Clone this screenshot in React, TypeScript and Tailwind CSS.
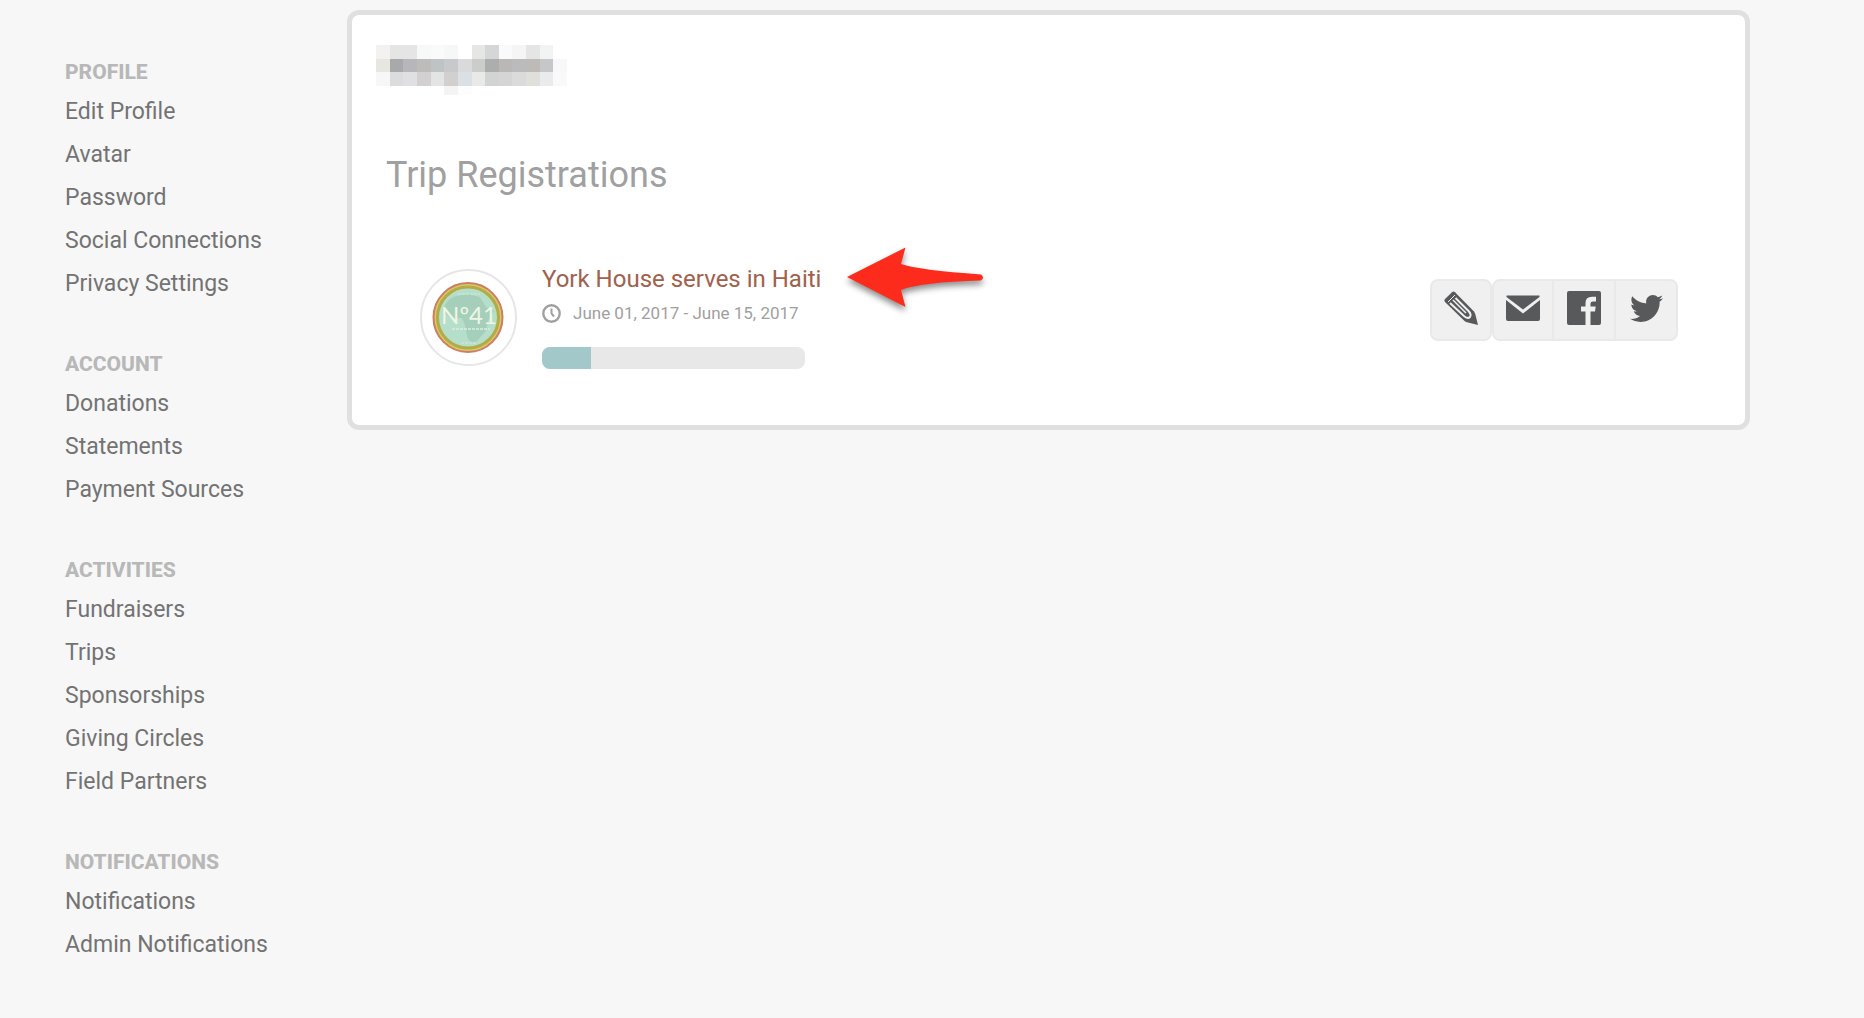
import type { ReactNode } from "react"
import { FaTwitter } from "react-icons/fa"

interface NavSection {
  title: string
  items: string[]
}

const sections: NavSection[] = [
  {
    title: "Profile",
    items: ["Edit Profile", "Avatar", "Password", "Social Connections", "Privacy Settings"],
  },
  { title: "Account", items: ["Donations", "Statements", "Payment Sources"] },
  {
    title: "Activities",
    items: ["Fundraisers", "Trips", "Sponsorships", "Giving Circles", "Field Partners"],
  },
  { title: "Notifications", items: ["Notifications", "Admin Notifications"] },
]

// Pixelated name, one color per cell
const nameCells: string[][] = [
  ["#f3f2f1", "#e5e5e5", "#e5e5e5", "#f7f9f8", "#fafafa", "#f6f8f7", "#fff", "#e6e6e4", "#d5d6d8", "#fafafb", "#f5f5f5", "#e5e5e5", "#f2f4f4", "#fff"],
  ["#e7e6e1", "#a8a9ab", "#b7b6bb", "#bdbcbb", "#bec3c4", "#c8c9cb", "#dadadd", "#cbcdca", "#adadad", "#b9b8b6", "#bbbbbe", "#bebab7", "#c6c7c9", "#f8f8fb"],
  ["#f7f7f7", "#dadcde", "#e0e0e3", "#d2d0d0", "#e3e5e4", "#d1d0ce", "#dae0e4", "#e9e9e7", "#d1d4d3", "#d5d5d5", "#dbdbdb", "#e0dfdc", "#e9ebed", "#f9f9f9"],
  ["#fff", "#fff", "#fff", "#fff", "#fff", "#f4f4f4", "#fdfdfd", "#fff", "#fff", "#fff", "#fff", "#fff", "#fff", "#fff"],
]

const HiddenName = () => (
  <svg width="191" height="50" viewBox="0 0 14 3.65" preserveAspectRatio="none" shapeRendering="crispEdges" role="img" aria-label="Hidden name">
    {nameCells.map((row, y) =>
      row.map((fill, x) => <rect key={`${x}-${y}`} x={x} y={y} width="1" height="1" fill={fill} />)
    )}
  </svg>
)

const PencilIcon = () => (
  <svg width="34" height="34" viewBox="0 0 34 34">
    <path d="M8 1.2Q9.5 0 11 1.2L30 20.5Q31 22 31.5 24L34 34L24 31.5Q22 31 20.5 30L1 11Q-.2 9.5 1 8Z" fill="#58595b" />
    <path d="M6 12L20.5 25.5Q24 28 26 26Q27.5 23.5 25 20.5L11.5 7" fill="none" stroke="#f0f0f0" strokeWidth="2" />
    <path d="M9 9L22 22" stroke="#f0f0f0" strokeWidth="1.5" />
    <path d="M4 11L11 4" stroke="#f0f0f0" strokeWidth="1" />
  </svg>
)

const MailIcon = () => (
  <svg width="34" height="34" viewBox="0 0 34 34" fill="#58595b">
    <path d="M.5 4.5H33.5V6L17 18.5L.5 6Z" />
    <path d="M0 9L17 22.5L34 9V28Q34 30 32 30H2Q0 30 0 28Z" />
  </svg>
)

const FacebookIcon = () => (
  <svg width="34" height="34" viewBox="0 0 34 34">
    <path d="M2 0H32Q34 0 34 2V32Q34 34 32 34H23.5V20.5H28L28.7 15.5H23.5V12.5Q23.5 10.5 26 10.5H29V5.8H25Q18.5 5.8 18.5 12V15.5H14V20.5H18.5V34H2Q0 34 0 32V2Q0 0 2 0Z" fill="#58595b" />
  </svg>
)

const ClockIcon = () => (
  <svg width="19" height="19" viewBox="0 0 19 19" fill="none" stroke="#a0a0a0" strokeWidth="2.4">
    <circle cx="9.5" cy="9.5" r="8.2" />
    <path d="M9.5 4.5V9.5L12 12.5" strokeWidth="2" />
  </svg>
)

const TripBadge = () => (
  <svg className="shrink-0" width="97" height="97" viewBox="0 0 97 97" role="img" aria-label="No 41">
    <defs>
      <clipPath id="badge-disc">
        <circle cx="48" cy="48.5" r="29" />
      </clipPath>
    </defs>
    <circle cx="48.5" cy="48.5" r="47.5" fill="#fff" stroke="#e6e6e6" strokeWidth="2" />
    <circle cx="48" cy="48.5" r="34.5" fill="#d5c968" stroke="#cf7c62" strokeWidth="2" />
    <circle cx="48" cy="48.500" r="30.5" fill="#b5dfcb" stroke="#b3ab45" strokeWidth="3" />
    <g clipPath="url(#badge-disc)">
      <path d="M24 38Q28 29 36 27L48 25L60 28L66 38L74 42L68 52L66 62L57 72Q50 76 47 67L45 56L42 49L31 49L25 44Z" fill="#a5cfbb" />
      <text x="49" y="55" textAnchor="middle" fontFamily="Lato, sans-serif" fontSize="24" fill="#eef6e4">
        Nº41
      </text>
      <path d="M32 60H70" stroke="#d9eedb" strokeWidth="1.5" strokeDasharray="3 1" />
      <path d="M41 74H57M38 25H60" stroke="#c8e6d3" strokeWidth="1.5" strokeDasharray="3 1" />
    </g>
  </svg>
)

const PointerArrow = () => (
  <svg className="absolute -top-6 left-full ml-6 overflow-visible drop-shadow-[0_4px_3px_rgba(0,0,0,0.45)]" width="140" height="62" viewBox="0 0 140 62" aria-hidden="true">
    <path d="M2 32L60.5 2.5L56 19Q74 25 136 29.5Q140 32.5 136 35.5Q76 37 56 45L60.5 62Z" fill="#fd2b1c" />
  </svg>
)

const ShareButton = ({ label, className, children }: { label: string; className: string; children: ReactNode }) => (
  <button
    type="button"
    aria-label={label}
    className={`flex h-[62px] w-[62px] items-center justify-center border-2 border-[#e9e9e9] bg-[#f0f0f0] pb-1 text-[#58595b] ${className}`}
  >
    {children}
  </button>
)

const Sidebar = () => (
  <nav className="flex w-[347px] shrink-0 flex-col gap-[33px] pt-[46px] pl-[65px]">
    {sections.map((section) => (
      <section key={section.title}>
        <h2 className="pt-2 text-[21px] leading-9 font-extrabold text-[#b8b8b8] uppercase">{section.title}</h2>
        <ul className="text-[23px] leading-[43px] text-[#737373]">
          {section.items.map((item) => (
            <li key={item}>
              <a href="#">{item}</a>
            </li>
          ))}
        </ul>
      </section>
    ))}
  </nav>
)

const TripRow = () => (
  <article className="flex items-start gap-[25px] pr-[43px] pl-11">
    <TripBadge />
    <div className="flex flex-col items-start">
      <div className="relative">
        <a href="#" className="block text-2xl leading-5 text-[#a0614c]">
          York House serves in Haiti
        </a>
        <PointerArrow />
      </div>
      <p className="mt-3 flex items-center gap-3 text-[17px] leading-6 text-[#a0a0a0]">
        <ClockIcon />
        June 01, 2017 - June 15, 2017
      </p>
      <div
        role="progressbar"
        aria-label="Funds raised"
        aria-valuenow={19}
        className="mt-[22px] h-[22px] w-[263px] overflow-hidden rounded-lg bg-[#e8e8e8]"
      >
        <div className="h-full bg-[#a3c8ca]" style={{ width: "18.7%" }} />
      </div>
    </div>
    <div className="mt-[10px] ml-auto flex">
      <ShareButton label="Edit" className="rounded-lg">
        <PencilIcon />
      </ShareButton>
      <ShareButton label="Email" className="rounded-l-lg">
        <MailIcon />
      </ShareButton>
      <ShareButton label="Facebook" className="border-l-0">
        <FacebookIcon />
      </ShareButton>
      <ShareButton label="Twitter" className="rounded-r-lg border-l-0">
        <FaTwitter size={33} />
      </ShareButton>
    </div>
  </article>
)

export default function App() {
  return (
    <div className="flex min-h-screen items-start bg-[#f7f7f7] font-[Roboto,sans-serif]">
      <Sidebar />
      <main className="mt-[10px] mr-[114px] min-w-0 flex-1 rounded-xl border-[5px] border-[#e0e0e0] bg-white px-6 pt-[30px] pb-14">
        <HiddenName />
        <h1 className="mt-14 pl-[10px] text-4xl leading-12 text-[#a0a0a0]">Trip Registrations</h1>
        <div className="mt-[70px]">
          <TripRow />
        </div>
      </main>
    </div>
  )
}
